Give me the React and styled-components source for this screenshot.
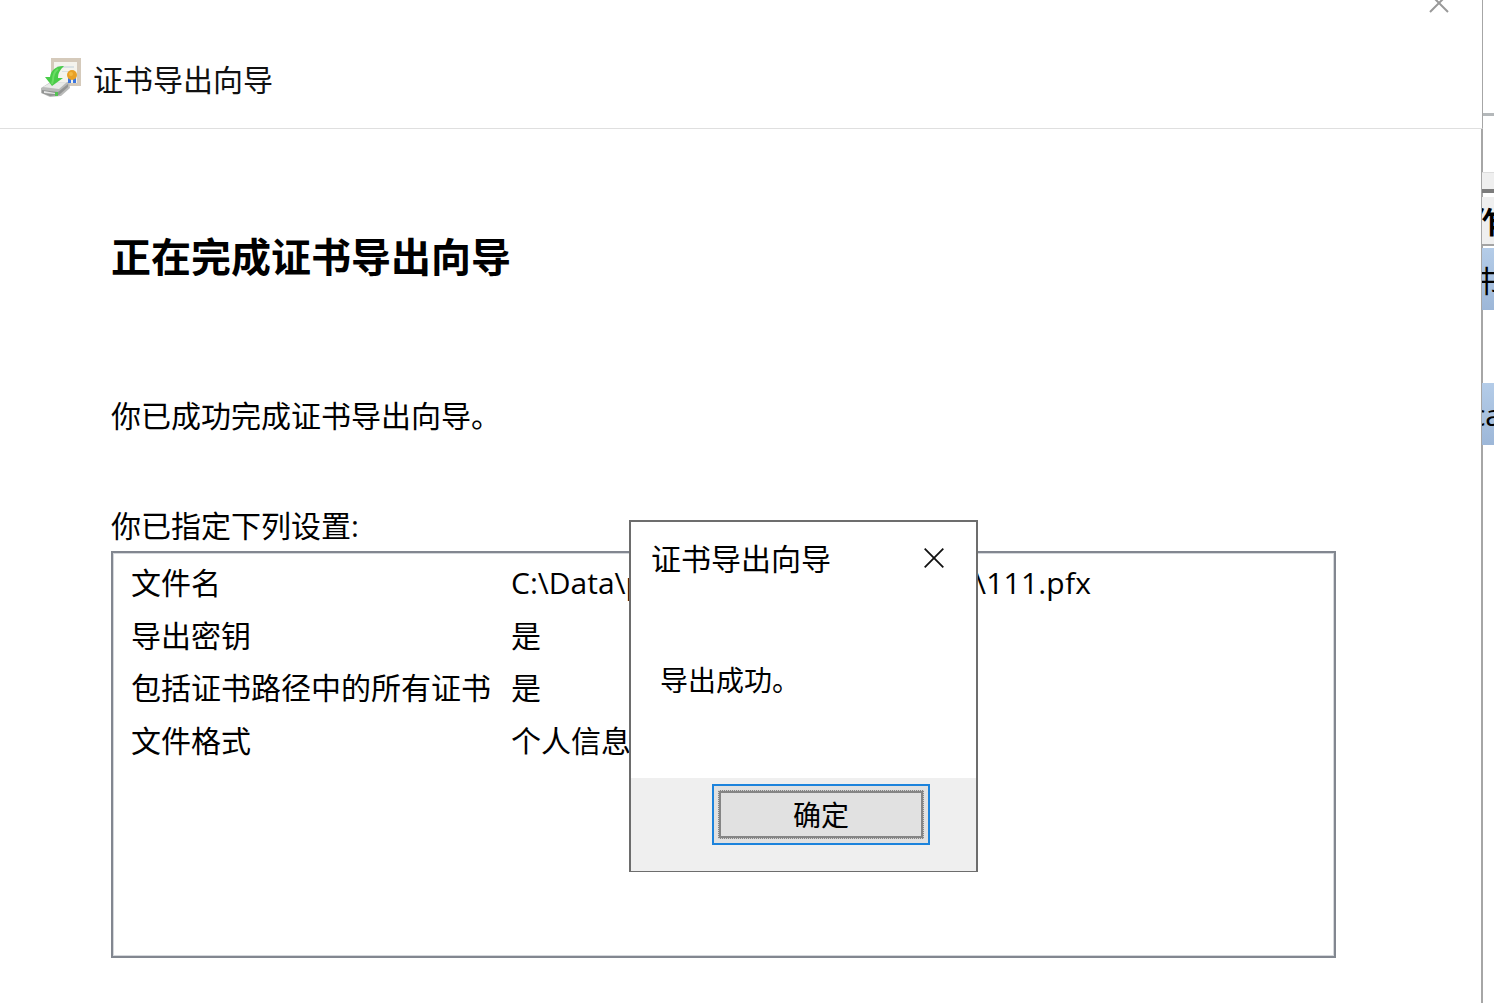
import React from 'react'

import styled, { createGlobalStyle } from 'styled-components'

const GlobalStyle = createGlobalStyle`
  * {
    box-sizing: border-box;
  }
  body {
    margin: 0;
    background: #fff;
    color: #000;
    font-family: 'Open Sans', 'Noto Sans CJK SC', sans-serif;
    font-size: 30px;
    overflow: hidden;
  }
`

const Desktop = styled.div`
  position: relative;
  display: flex;
  width: 1494px;
  height: 1003px;
  overflow: hidden;
`

const Wizard = styled.main`
  display: flex;
  flex-direction: column;
  flex: none;
  width: 1483px;
  background: #fff;
`

const WizardHeader = styled.header`
  position: relative;
  display: flex;
  align-items: flex-start;
  height: 129px;
  padding: 58px 0 0 40px;
  border-bottom: 1px solid #dfdfdf;
  border-right: 1px solid #a6a6a6;
`

const WizardName = styled.span`
  margin-left: 12px;
  line-height: 44px;
  color: #111;
`

const CornerClose = styled.svg`
  position: absolute;
  top: -7px;
  right: 33px;
`

const WizardBody = styled.section`
  flex: 1;
  padding: 102px 0 0 111px;
  border-right: 2px solid #a6a6a6;
`

const Heading = styled.h1`
  margin: 0;
  font-size: 40px;
  font-weight: 700;
  line-height: 52px;
`

const Paragraph = styled.p`
  margin: ${props => props.$gap}px 0 0;
  line-height: 44px;
`

const SettingsList = styled.dl`
  width: 1225px;
  height: 407px;
  margin: 3px 0 0;
  padding: 5px 0 0 18px;
  border: 2px solid #828790;
  box-shadow: inset 0 0 0 1px #d5d8dc;
`

const SettingRow = styled.div`
  display: grid;
  grid-template-columns: 380px 1fr;
  height: 52.6px;
  line-height: 50px;
  white-space: nowrap;
`

const SettingName = styled.dt``

const SettingValue = styled.dd`
  display: flex;
  margin: 0;
`

const PathHead = styled.span`
  width: 464px;
`

const PathTail = styled.span`
  letter-spacing: 0.2px;
`

const Side = styled.aside`
  flex: 1;
  min-width: 0;
  overflow: hidden;
  margin-left: -1px;
  padding-top: 113px;
`

const SideRule = styled.div`
  height: 3px;
  background: #b4b8ba;
`

const SideBar = styled.div`
  height: 21px;
  margin-top: 56px;
  background: #efefef;
  border-top: 1px solid #ddd;
  border-bottom: 4px solid #7c7c7c;
`

const SideCell = styled.div`
  height: ${props => props.$height}px;
  margin-top: ${props => props.$gap}px;
  overflow: hidden;
  white-space: nowrap;
  line-height: ${props => props.$line}px;
  text-indent: ${props => props.$indent}px;
`

const SideTitle = styled(SideCell)`
  background: #efefef;
  border-bottom: 2px solid #a3a3a3;
  font-weight: 700;
`

const SideItem = styled(SideCell)`
  background: linear-gradient(#b4cce8, #9db7d8);
`

const MessageBox = styled.div`
  position: absolute;
  top: 520px;
  left: 629px;
  display: flex;
  flex-direction: column;
  width: 349px;
  height: 352px;
  background: #fff;
  border: 2px solid #6d6d6d;
  border-bottom-width: 1px;
`

const MessageTitle = styled.div`
  display: flex;
  align-items: flex-start;
  justify-content: space-between;
  height: 72px;
  padding: 15px 32px 0 20px;
  line-height: 44px;
`

const MessageClose = styled.svg`
  margin-top: 11px;
`

const MessageText = styled.p`
  flex: 1;
  margin: 0;
  padding: 65px 0 0 29px;
  font-size: 28px;
  line-height: 42px;
`

const MessageFooter = styled.div`
  height: 93px;
  padding: 6px 46px 0 81px;
  background: #efefef;
`

const OkButton = styled.button`
  display: block;
  width: 218px;
  height: 61px;
  padding: 4px;
  background: #e1e1e1;
  border: 2px solid #1c83dc;
  color: #000;
  font-family: inherit;
  font-size: 28px;
`

const FocusRing = styled.span`
  display: block;
  height: 49px;
  border: 3px solid #858585;
  outline: 1px dotted #d4d4d4;
  outline-offset: -1px;
  line-height: 45px;
`

const CertificateIcon = () => (
  <svg width="41" height="41" viewBox="0 0 41 41">
    <path d="M11 0h30v28H11z" fill="#d5cabb" />
    <path d="M14 4h23v21H14z" fill="#f4f3ed" />
    <path d="M17 8h17v2H17zM22 13h8v1h-8z" fill="#d9e1e3" />
    <path d="M1 30l8-5 20-1 1 6-9 8-11 1-9-4z" fill="#b9bab9" />
    <path d="M3 29l7-4 17-1-8 7z" fill="#e9ebe9" />
    <path d="M2 32l16 2 10-8v3l-9 8-9 1-8-3z" fill="#929493" />
    <path d="M4 33l11 2v1L4 35z" fill="#e5e5e5" />
    <path d="M15 34h3v4h-3z" fill="#53c253" />
    <path
      d="M23 8c-7 0-12 4-13 11H5l7 9 11-8h-5c0-5 2-8 6-12z"
      fill="#49cc49"
    />
    <path d="M18 11c-4 3-5 6-5 11l-1 4" fill="none" stroke="#6bdc64" strokeWidth="2" />
    <path d="M28 19h3v6h-3zM33 19h3v6h-3z" fill="#3c76df" />
    <circle cx="32" cy="17" r="5" fill="#e9a127" />
    <circle cx="31" cy="16" r="2" fill="#f4b942" />
  </svg>
)

const settings = [
  { name: '导出密钥', value: '是' },
  { name: '包括证书路径中的所有证书', value: '是' },
  { name: '文件格式', value: '个人信息' },
]

const App = () => (
  <>
    <GlobalStyle />
    <Desktop>
      <Wizard>
        <WizardHeader>
          <CertificateIcon />
          <WizardName>证书导出向导</WizardName>
          <CornerClose width="20" height="20" viewBox="0 0 20 20">
            <path d="M1 1l18 18M19 1L1 19" stroke="#999" strokeWidth="2" />
          </CornerClose>
        </WizardHeader>
        <WizardBody>
          <Heading>正在完成证书导出向导</Heading>
          <Paragraph $gap={111}>你已成功完成证书导出向导。</Paragraph>
          <Paragraph $gap={66}>你已指定下列设置:</Paragraph>
          <SettingsList>
            <SettingRow>
              <SettingName>文件名</SettingName>
              <SettingValue>
                <PathHead>{'C:\\Data\\p'}</PathHead>
                <PathTail>{'\\111.pfx'}</PathTail>
              </SettingValue>
            </SettingRow>
            {settings.map(({ name, value }) => (
              <SettingRow key={name}>
                <SettingName>{name}</SettingName>
                <SettingValue>{value}</SettingValue>
              </SettingRow>
            ))}
          </SettingsList>
        </WizardBody>
      </Wizard>
      <Side>
        <SideRule />
        <SideBar />
        <SideTitle $height={49} $gap={4} $line={50} $indent={-9}>
          作
        </SideTitle>
        <SideItem $height={62} $gap={2} $line={66} $indent={-9}>
          书
        </SideItem>
        <SideItem $height={62} $gap={73} $line={64} $indent={-11}>
          ca
        </SideItem>
      </Side>
      <MessageBox>
        <MessageTitle>
          <span>证书导出向导</span>
          <MessageClose width="20" height="20" viewBox="0 0 20 20">
            <path d="M.7.7l18.6 18.6M19.3.7L.7 19.3" stroke="#111" strokeWidth="1.8" />
          </MessageClose>
        </MessageTitle>
        <MessageText>导出成功。</MessageText>
        <MessageFooter>
          <OkButton>
            <FocusRing>确定</FocusRing>
          </OkButton>
        </MessageFooter>
      </MessageBox>
    </Desktop>
  </>
)

export default App
